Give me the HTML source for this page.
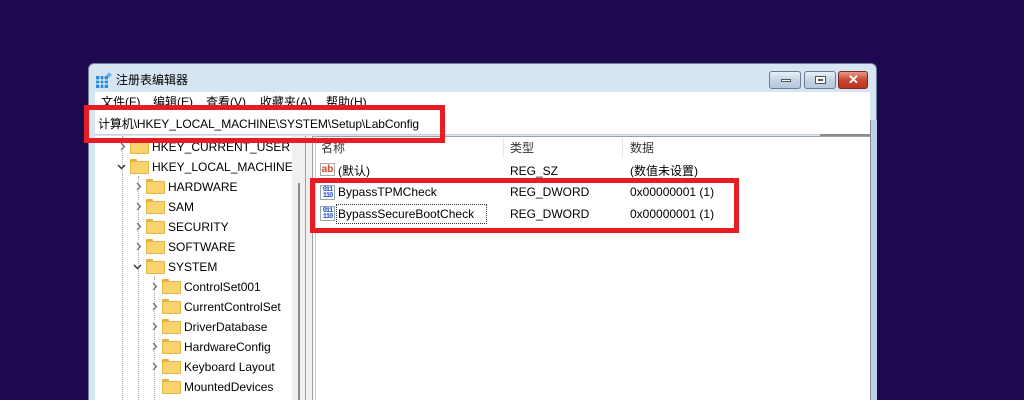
<!DOCTYPE html>
<html><head><meta charset="utf-8"><style>
*{margin:0;padding:0;box-sizing:border-box}
html,body{width:1024px;height:400px;overflow:hidden}
body{background:#1e0850;position:relative;font-family:"Liberation Sans","Noto Sans CJK SC",sans-serif;font-size:12px;color:#000}
.abs{position:absolute}
.win{left:88px;top:63px;width:789px;height:337px;background:#d7e4f2;border:1px solid #6f7f96;border-bottom:none;border-radius:6px 6px 0 0}
.t{position:absolute;white-space:nowrap;line-height:14px}
.fold{position:absolute;width:17px;height:13px}
.fold:before{content:"";position:absolute;left:0;top:0;width:7px;height:3px;background:#e5b33a;border-radius:1px 1px 0 0}
.fold:after{content:"";position:absolute;left:0;top:2px;width:17px;height:11px;background:#f9d46e;border:1px solid #e3b544;border-radius:1px}
.arr{position:absolute;width:9px;height:9px}
.btn{position:absolute;top:8px;height:18px;border:1px solid #6d7b90;border-radius:3px;background:linear-gradient(#e9f0f8,#c5d4e6 50%,#b6c8dd)}
.dot{position:absolute;border-left:1px dotted #aaa}
.ico{position:absolute;width:15px;height:15px;background:#fff;border:1px solid #9aa;font:bold 7px/6px "Liberation Mono",monospace;color:#2a4fd0;text-align:center;padding-top:1px;letter-spacing:-1px}
</style></head><body>
<svg width="0" height="0" style="position:absolute"><defs>
<symbol id="r" viewBox="0 0 9 9"><path d="M3 1 L6.5 4.5 L3 8" fill="none" stroke="#777" stroke-width="1.3"/></symbol>
<symbol id="d" viewBox="0 0 9 9"><path d="M1 3 L4.5 6.5 L8 3" fill="none" stroke="#333" stroke-width="1.5"/></symbol>
</defs></svg>
<div class="abs win"></div>
<svg class="abs" style="left:96px;top:73px" width="16" height="16"><rect x="0" y="3" width="12" height="12" fill="#2e8ad8"/><g stroke="#fff" stroke-width="1"><line x1="4" y1="3" x2="4" y2="15"/><line x1="8" y1="3" x2="8" y2="15"/><line x1="0" y1="7" x2="12" y2="7"/><line x1="0" y1="11" x2="12" y2="11"/></g><rect x="11" y="0" width="4" height="4" fill="#56b4ee" transform="rotate(45 13 2)"/></svg>
<div class="t" style="left:116px;top:73px">注册表编辑器</div>
<div class="btn" style="left:769px;top:71px;width:32px"><div class="abs" style="left:11px;top:7px;width:10px;height:3px;background:#fff;border:1px solid #555"></div></div>
<div class="btn" style="left:804px;top:71px;width:32px"><div class="abs" style="left:10px;top:4px;width:11px;height:8px;border:1px solid #555;background:#fff"><div class="abs" style="left:2px;top:2px;width:5px;height:2px;border:1px solid #555"></div></div></div>
<div class="btn" style="left:838px;top:71px;width:30px;background:linear-gradient(#e59a8a,#c9462f 50%,#b8341e);border-color:#7a2a20"><div class="abs" style="left:9px;top:1px;color:#fff;font-weight:bold;font-size:13px;line-height:14px">✕</div></div>
<div class="abs" style="left:95px;top:92px;width:775px;height:18px;background:#fff"></div>
<div class="t" style="left:101px;top:95px">文件(F)</div>
<div class="t" style="left:153px;top:95px">编辑(E)</div>
<div class="t" style="left:206px;top:95px">查看(V)</div>
<div class="t" style="left:260px;top:95px">收藏夹(A)</div>
<div class="t" style="left:326px;top:95px">帮助(H)</div>
<div class="abs" style="left:95px;top:110px;width:775px;height:25px;background:#fff;border-bottom:1px solid #d0d0d0"></div>
<div class="t" style="left:98px;top:117px;letter-spacing:-0.1px">计算机\HKEY_LOCAL_MACHINE\SYSTEM\Setup\LabConfig</div>
<div class="abs" style="left:95px;top:136px;width:210px;height:264px;background:#fff"></div>
<div class="abs" style="left:292px;top:136px;width:13px;height:264px;background:#f0f0f0"></div>
<div class="abs" style="left:298px;top:183px;width:2px;height:217px;background:#8a8a8a"></div>
<div class="abs" style="left:305px;top:136px;width:8px;height:264px;background:#f0f0f0;border-left:1px solid #a0a0a0;border-right:1px solid #a0a0a0"></div>
<div class="abs" style="left:313px;top:136px;width:557px;height:264px;background:#fff"></div>
<div class="abs" style="left:313px;top:136px;width:557px;height:22px;background:#fff;border-top:1px solid #a0a0a0"></div>
<div class="abs" style="left:503px;top:138px;width:1px;height:20px;background:#e5e5e5"></div>
<div class="abs" style="left:622px;top:138px;width:1px;height:20px;background:#e5e5e5"></div>
<div class="abs" style="left:315px;top:136px;width:1px;height:264px;background:#d0d0d0"></div>
<div class="abs" style="left:820px;top:134px;width:50px;height:2px;background:#8a8a8a"></div>
<div class="abs" style="left:870px;top:120px;width:7px;height:280px;background:#b8d1ec;border-left:1px solid #8a8a8a"></div>
<div class="t" style="left:321px;top:141px;color:#333">名称</div>
<div class="t" style="left:510px;top:141px;color:#333">类型</div>
<div class="t" style="left:630px;top:141px;color:#333">数据</div>
<div class="abs" style="left:320px;top:163px;width:15px;height:13px;border:1px solid #aaa;background:#fff;color:#d5452a;font:bold 10px/11px 'Liberation Sans',sans-serif;text-align:center">ab</div>
<div class="t" style="left:338px;top:164px">(默认)</div>
<div class="t" style="left:510px;top:164px">REG_SZ</div>
<div class="t" style="left:630px;top:164px">(数值未设置)</div>
<div class="ico" style="left:320px;top:185px">011<br>110</div>
<div class="t" style="left:338px;top:185px">BypassTPMCheck</div>
<div class="t" style="left:510px;top:185px">REG_DWORD</div>
<div class="t" style="left:630px;top:185px">0x00000001 (1)</div>
<div class="ico" style="left:320px;top:206px">011<br>110</div>
<div class="abs" style="left:336px;top:204px;width:151px;height:20px;border:1px dotted #333"></div>
<div class="t" style="left:338px;top:207px">BypassSecureBootCheck</div>
<div class="t" style="left:510px;top:207px">REG_DWORD</div>
<div class="t" style="left:630px;top:207px">0x00000001 (1)</div>
<div class="dot" style="left:122px;top:136px;height:264px"></div>
<div class="dot" style="left:138px;top:176px;height:224px"></div>
<div class="dot" style="left:154px;top:276px;height:124px"></div>
<svg class="arr" style="left:118px;top:142px"><use href="#r"/></svg><div class="fold" style="left:130px;top:139px"></div><div class="t" style="left:152px;top:140px">HKEY_CURRENT_USER</div>
<svg class="arr" style="left:117px;top:162px"><use href="#d"/></svg><div class="fold" style="left:130px;top:159px"></div><div class="t" style="left:152px;top:160px">HKEY_LOCAL_MACHINE</div>
<svg class="arr" style="left:134px;top:182px"><use href="#r"/></svg><div class="fold" style="left:146px;top:179px"></div><div class="t" style="left:168px;top:180px">HARDWARE</div>
<svg class="arr" style="left:134px;top:202px"><use href="#r"/></svg><div class="fold" style="left:146px;top:199px"></div><div class="t" style="left:168px;top:200px">SAM</div>
<svg class="arr" style="left:134px;top:222px"><use href="#r"/></svg><div class="fold" style="left:146px;top:219px"></div><div class="t" style="left:168px;top:220px">SECURITY</div>
<svg class="arr" style="left:134px;top:242px"><use href="#r"/></svg><div class="fold" style="left:146px;top:239px"></div><div class="t" style="left:168px;top:240px">SOFTWARE</div>
<svg class="arr" style="left:133px;top:262px"><use href="#d"/></svg><div class="fold" style="left:146px;top:259px"></div><div class="t" style="left:168px;top:260px">SYSTEM</div>
<svg class="arr" style="left:150px;top:282px"><use href="#r"/></svg><div class="fold" style="left:162px;top:279px"></div><div class="t" style="left:184px;top:280px">ControlSet001</div>
<svg class="arr" style="left:150px;top:302px"><use href="#r"/></svg><div class="fold" style="left:162px;top:299px"></div><div class="t" style="left:184px;top:300px">CurrentControlSet</div>
<svg class="arr" style="left:150px;top:322px"><use href="#r"/></svg><div class="fold" style="left:162px;top:319px"></div><div class="t" style="left:184px;top:320px">DriverDatabase</div>
<svg class="arr" style="left:150px;top:342px"><use href="#r"/></svg><div class="fold" style="left:162px;top:339px"></div><div class="t" style="left:184px;top:340px">HardwareConfig</div>
<svg class="arr" style="left:150px;top:362px"><use href="#r"/></svg><div class="fold" style="left:162px;top:359px"></div><div class="t" style="left:184px;top:360px">Keyboard Layout</div>
<div class="fold" style="left:162px;top:379px"></div><div class="t" style="left:184px;top:380px">MountedDevices</div>
<div class="abs" style="left:84px;top:105px;width:361px;height:38px;border:5px solid #e81c24"></div>
<div class="abs" style="left:310px;top:178px;width:429px;height:55px;border:5px solid #e81c24"></div>
</body></html>
